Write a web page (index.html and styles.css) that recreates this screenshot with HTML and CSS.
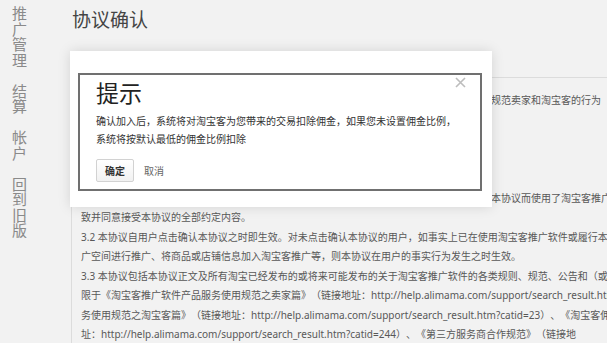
FILE: index.html
```html
<html>
    <head>
        <meta charset="utf-8">
        <link rel="stylesheet" href="styles.css">
    </head>
    <body>
        <div class="page">
            <div class="side">
                <a class="nav">推广管理</a>
                <a class="nav">结算</a>
                <a class="nav">帐户</a>
                <a class="nav">回到旧版</a>
            </div>
            <div class="main">
                <h1 class="title">协议确认</h1>
                <div class="agreement">
                    <p>本协议是淘宝客推广软件服务的使用者与阿里妈妈之间就淘宝客推广软件服务所订立的协议，规范卖家和淘宝客的行为</p>
                    <p>1.2 阿里妈妈有权根据需要不时地修订本协议及相关规则。</p>
                    <p>1.3 变更后的协议和规则一经公布即生效。</p>
                    <p>二、协议的确认与生效</p>
                    <p>3.1 用户确认：</p>
                    <p>用户应当在开始使用淘宝客推广软件之前认真阅读全部的协议内容，如用户因理解并同意接受本协议而使用了淘宝客推广软件，则视为用户已对本协议内容理解一<br>致并同意接受本协议的全部约定内容。</p>
                    <p>3.2 本协议自用户点击确认本协议之时即生效。对未点击确认本协议的用户，如事实上已在使用淘宝客推广软件或履行本协议，如在淘宝客推<br>广空间进行推广、将商品或店铺信息加入淘宝客推广等，则本协议在用户的事实行为发生之时生效。</p>
                    <p>3.3 本协议包括本协议正文及所有淘宝已经发布的或将来可能发布的关于淘宝客推广软件的各类规则、规范、公告和（或）通知等，包括但不<br>限于《淘宝客推广软件产品服务使用规范之卖家篇》（链接地址：http://help.alimama.com/support/search_result.htm?catid=22）、《淘宝客推广软件产品服<br>务使用规范之淘宝客篇》（链接地址：http://help.alimama.com/support/search_result.htm?catid=23）、《淘宝客佣金结算规范》（链接地<br>址：http://help.alimama.com/support/search_result.htm?catid=244）、《第三方服务商合作规范》（链接地<br>址：http://help.alimama.com/support/）</p>
                </div>
            </div>
        </div>

        <div class="dialog">
            <a class="close">
                <svg width="11" height="11" viewBox="0 0 11 11"><path d="M1 1L10 10M10 1L1 10" stroke="#bdbdbd" stroke-width="1.6"/></svg>
            </a>
            <div class="dialog-inner">
                <h2>提示</h2>
                <p class="msg">确认加入后，系统将对淘宝客为您带来的交易扣除佣金，如果您未设置佣金比例，<br>系统将按默认最低的佣金比例扣除</p>
                <div class="actions">
                    <button class="ok">确定</button>
                    <a class="cancel">取消</a>
                </div>
            </div>
        </div>
    </body>
</html>
```

FILE: styles.css
```css
html, body{
    margin: 0;
    height: 100%;
}
body{
    font-family: "Noto Sans", "Noto Sans CJK SC", sans-serif;
    background: #f2f2f2;
    overflow: hidden;
    position: relative;
    text-spacing-trim: space-all;
}
.page{
    display: flex;
    height: 100%;
}
.side{
    width: 71px;
    flex: none;
    box-sizing: border-box;
    padding: 5px 0 0 12px;
}
.nav{
    display: block;
    width: 15px;
    font-size: 15px;
    line-height: 15.5px;
    margin-bottom: 15.5px;
    color: #8a8a8a;
    font-family: "Noto Sans CJK SC", sans-serif;
}
.main{
    flex: 1;
    min-width: 0;
    overflow: hidden;
}
.title{
    margin: 0 0 45px 0;
    padding: 8px 0 0 1px;
    font-size: 19px;
    line-height: 24px;
    font-weight: normal;
    color: #444;
}
.agreement{
    border-top: 1px solid #dcdcdc;
    border-left: 1px solid #dcdcdc;
    padding: 13px 0 0 9px;
    font-size: 10px;
    line-height: 19.5px;
    color: #585858;
    white-space: nowrap;
    height: 100%;
}
.agreement p{
    margin: 0;
}

/* dialog */
.dialog{
    position: absolute;
    left: 70px;
    top: 51px;
    width: 422px;
    height: 156px;
    box-sizing: border-box;
    padding: 22px 10px 16px 8px;
    background: #fff;
    box-shadow: 0 0 12px rgba(0,0,0,.13);
}
.close{
    position: absolute;
    left: 385px;
    top: 26px;
    width: 11px;
    height: 11px;
    line-height: 0;
}
.dialog-inner{
    height: 100%;
    box-sizing: border-box;
    border: 2px solid #707070;
    padding: 4px 0 0 16px;
}
.dialog-inner h2{
    margin: 0;
    font-size: 23px;
    line-height: 28px;
    font-weight: normal;
    color: #222;
}
.msg{
    margin: 5px 0 0 0;
    font-size: 10px;
    line-height: 18px;
    color: #333;
}
.actions{
    display: flex;
    align-items: center;
    gap: 10px;
    margin-top: 11px;
}
.ok{
    width: 38px;
    height: 23px;
    padding: 0;
    border: 1px solid #d2d2d2;
    border-radius: 2px;
    background: linear-gradient(#fff, #f1f1f1);
    font-family: "Noto Sans CJK SC", sans-serif;
    font-size: 10px;
    font-weight: bold;
    color: #333;
}
.cancel{
    font-size: 10px;
    color: #666;
}
```
